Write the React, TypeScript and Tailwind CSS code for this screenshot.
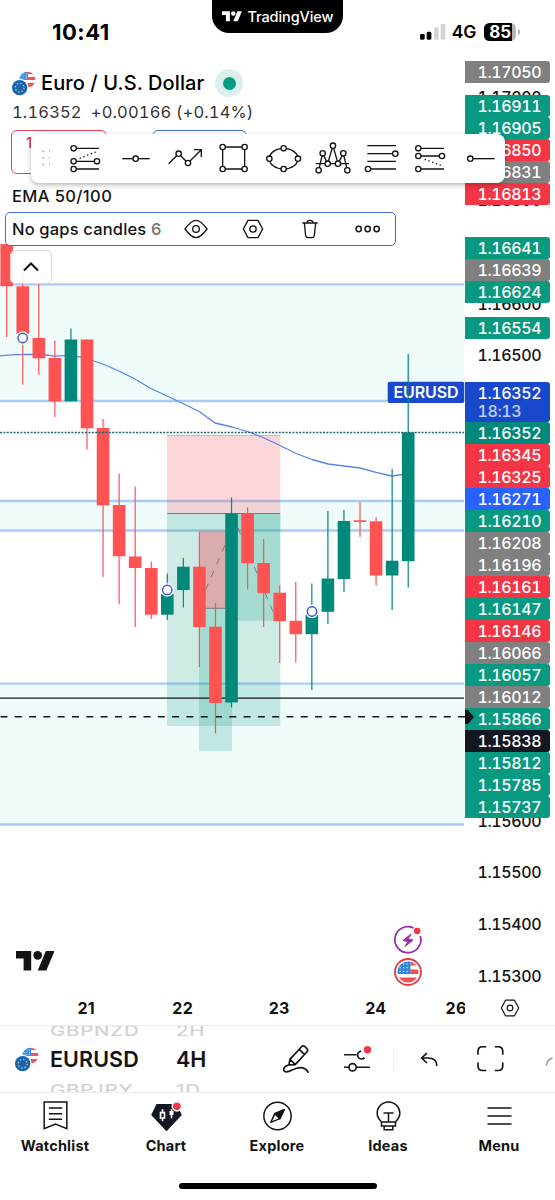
import React from 'react';

const GREEN = '#00897b';
const RED = '#ff5252';

// [colour, high, body top, body bottom, low]
const candles: [string, number, number, number, number][] = [
  [RED, 244, 244, 286.3, 337],
  [RED, 264, 286.3, 334, 384.5],
  [RED, 281, 338, 358.3, 374.5],
  [RED, 340.5, 358, 401.3, 417],
  [GREEN, 328.5, 339.5, 401.3, 401],
  [RED, 339.5, 339.5, 428.3, 449.5],
  [RED, 419, 428, 505.3, 577],
  [RED, 473.5, 505, 556.3, 604],
  [RED, 486.5, 556.5, 568, 627],
  [RED, 561.5, 568, 614.7, 619],
  [GREEN, 573.5, 594, 614.7, 620],
  [GREEN, 558, 566.7, 590, 607.5],
  [RED, 532, 566.7, 627, 667],
  [RED, 603, 626.7, 703, 733.5],
  [GREEN, 497.5, 513.5, 702.5, 707.5],
  [RED, 507.5, 513.5, 563.3, 589.5],
  [RED, 539, 563, 593, 627],
  [RED, 585.5, 592.7, 621.2, 663],
  [RED, 582, 620.8, 634.2, 662.5],
  [GREEN, 583.5, 615, 634.2, 690],
  [GREEN, 511, 578.5, 611.8, 624],
  [GREEN, 510, 521, 579, 592],
  [RED, 502, 520.3, 522, 537],
  [RED, 517, 521.3, 575.5, 585.5],
  [GREEN, 469, 560.7, 575.5, 610],
  [GREEN, 354, 432.3, 561.2, 587.5],
];

// ticks that are fully covered by a price label stay empty
const ticks = [
  '1.17000', '', '1.16800', '', '1.16600', '1.16500', '', '', '', '', '', '', '', '',
  '1.15600', '1.15500', '1.15400', '1.15300',
];

const green = 'bg-[#089981]';
const red = 'bg-[#f23645]';
const gray = 'bg-[#808080]';

const labelGroups = [
  { gap: 'mt-[61px]', items: [['1.17050', gray]] },
  { gap: 'mt-3', items: [['1.16911', green], ['1.16905', green], ['1.16850', red], ['1.16831', gray], ['1.16813', red]] },
  { gap: 'mt-8', items: [['1.16641', green], ['1.16639', gray], ['1.16624', green]] },
  { gap: 'mt-3.5', items: [['1.16554', green]] },
];

const lowerLabels = [
  ['1.16352', 'bg-[#00897b]'], ['1.16345', red], ['1.16325', red], ['1.16271', 'bg-[#2962ff]'], ['1.16210', green],
  ['1.16208', gray], ['1.16196', gray], ['1.16161', red], ['1.16147', green], ['1.16146', red], ['1.16066', gray],
  ['1.16057', green], ['1.16012', gray], ['1.15866', green], ['1.15838', 'bg-[#131722]'], ['1.15812', green],
  ['1.15785', green], ['1.15737', green],
];

const Logo = ({ className }: { className: string }) => (
  <svg viewBox="0 4 35.5 18" className={className} fill="currentColor">
    <path d="M14 22H7V11H0V4h14v18zM28 22h-8l7.5-18h8L28 22z" />
    <circle cx="20" cy="8" r="4" />
  </svg>
);

const Flags = () => (
  <svg viewBox="0 0 72 75" className="w-6 h-[25px] shrink-0">
    <clipPath id="us"><circle cx="46" cy="26" r="24" /></clipPath>
    <g clipPath="url(#us)">
      <path fill="#fff" d="M20 0h52v52H20z" />
      <path fill="#ef5360" d="M46 3h26v7H46zM46 18h26v9H46zM20 36h52v14H20z" />
      <path fill="#3d8fe0" d="M20 0h28v27H20z" />
      <path stroke="#fff" strokeWidth="2" strokeDasharray="3 5" d="M26 9h22M26 16h22M26 22h22" />
    </g>
    <circle cx="23" cy="50" r="27" fill="#fff" />
    <circle cx="23" cy="50" r="23" fill="#1763b6" />
    <circle cx="23" cy="50" r="13" fill="none" stroke="#cfd86a" strokeWidth="4" strokeDasharray="4 6.2" />
  </svg>
);

const Hexagon = ({ className }: { className: string }) => (
  <svg viewBox="0 0 66 60" className={className} fill="none" stroke="#131313" strokeWidth="4" strokeLinejoin="round">
    <path d="M18 4h30l14 26-14 26H18L4 30z" />
    <circle cx="33" cy="30" r="9.5" />
  </svg>
);

const Dots = ({ points }: { points: number[][] }) => (
  <>{points.map(([x, y], i) => <circle key={i} cx={x} cy={y} r="8" fill="#fff" />)}</>
);

const tools = [
  <>
    <path d="M-28-29h68M-28 10h54M-28 33h68" /><path d="M-18 1l56-22" strokeDasharray="4 8" />
    <Dots points={[[-36, -29], [-36, 10], [34, 10], [-36, 33]]} />
  </>,
  <><path d="M-40 2h82" /><Dots points={[[0, 2]]} /></>,
  <>
    <path d="M-48 17l30-30 28 28 40-40M28-25h22v22" /><Dots points={[[-18, -13], [10, 15]]} />
  </>,
  <><path d="M-33-33h66v66h-66z" /><Dots points={[[-33, -33], [33, -33], [-33, 33], [33, 33]]} /></>,
  <><ellipse cx="0" cy="2" rx="43" ry="31" /><Dots points={[[0, -29], [43, 2], [0, 33], [-43, 2]]} /></>,
  <>
    <path d="M-51 17H49M-42 37l12-51 15 31L1-37l15 54 16-31 12 51" />
    <Dots points={[[1, -37], [-30, -14], [32, -14], [-15, 17], [16, 17], [-42, 37], [44, 37]]} />
  </>,
  <><path d="M-43-37h86M-43-13h80M-43 10h86M-37 33h80" /><Dots points={[[41, -13], [-41, 33]]} /></>,
  <>
    <path d="M-30-29h70M-30-6h60M-30 33h70" /><path d="M-18 4l56 21" strokeDasharray="4 8" />
    <Dots points={[[-37, -29], [-37, -6], [34, -6], [-37, 33]]} />
  </>,
  <><path d="M-25 2h67" /><Dots points={[[-31, 2]]} /></>,
];

const Chart = () => (
  <svg viewBox="0 0 465 993" className="w-[465px] h-[993px] shrink-0" fill="none">
    <path fill="#effcfb" d="M0 284h464v117H0zM0 501h464v29.5H0zM0 683.7h464v141H0z" />
    <path stroke="#abcbf5" strokeWidth="2.3" d="M0 284.3h464M0 401h464M0 501h464M0 530.5h464M0 683.7h464M0 824.5h464" />
    <path fill="#f23645" fillOpacity=".2" d="M167 435.5h113.3v78H167z" />
    <path fill="#089981" fillOpacity=".2" d="M167 513.5h113.3V726H167z" />
    <path fill="#089981" fillOpacity=".2" d="M232 513.5h48.3v107.3H232zM199 608.5h33V751h-33z" />
    <path fill="#f23645" fillOpacity=".35" d="M199 531.3h33v77.2h-33z" />
    <path stroke="#e58a94" strokeWidth=".7" d="M167 435.5h113.3M199 531.3h33" />
    <path stroke="#787b86" strokeWidth="1" d="M167 513.5h113.3M199 608.3h33M225 531.3h7" />
    <path stroke="#787b86" strokeDasharray="7 7" d="M200 603L231 531M238 528L276 619" />
    <path
      stroke="#5b82ea"
      strokeWidth="1.3"
      strokeLinejoin="round"
      d="M0 355.8Q10 354.5 25 354.3L42 354.5 55 356.2 70 355.3 82 357.3 94 361 104 364.5 120 371.5 135 379 150 388 166 395.5 183 403.5 200 412 215 423 232 427 252 433 264 438 280 445.5 296 453.5 312 459.5 328 464 344 466 360 468 376 472.3 392 476 406 474"
    />
    <path stroke="#131722" strokeWidth="1.3" d="M0 698.2h464" />
    <path stroke="#131722" strokeWidth="1.4" strokeDasharray="7 7.3" d="M0 716.8h465" strokeDashoffset="-.5" />
    {/* last price tag sits below the candle wick */}
    <rect x="387.7" y="381.7" width="76.6" height="21.3" rx="2" fill="#1848cc" />
    <text x="393.5" y="398" fontSize="16" fontWeight="600" fill="#fff" textLength="65">EURUSD</text>
    {candles.map(([color, high, top, bottom, low], i) => {
      const x = 6.7 + i * 16.06;
      return (
        <g key={i} fill={color}>
          <rect x={x - 0.6} y={high} width="1.2" height={low - high} />
          <rect x={x - 6.3} y={top} width="12.6" height={bottom - top} />
        </g>
      );
    })}
    <path stroke="#1d646b" strokeWidth="1.5" strokeDasharray="2 1.4" d="M0 432.5h464" />
    <g fill="#fff">
      <circle cx="22.7" cy="338" r="6.7" /><circle cx="167.3" cy="590" r="6.700" /><circle cx="312" cy="611.5" r="6.7" />
    </g>
    <g stroke="#2f55d4" strokeWidth="1.4">
      <circle cx="22.7" cy="338" r="4.7" /><circle cx="167.3" cy="590" r="4.7" /><circle cx="312" cy="611.5" r="4.7" />
    </g>

    {/* event markers */}
    <g stroke="#9c27b0" strokeWidth="1.7">
      <path d="M413.5 928a13 13 0 1 0 6.8 8" />
      <path fill="#9c27b0" strokeWidth="1" strokeLinejoin="round" d="M411 934l-8 6.5 5 1-3 5 8-6.5-5-1z" />
    </g>
    <circle cx="417.2" cy="931" r="3.3" fill="#f23645" />
    <circle cx="408" cy="972" r="13" fill="#fff" stroke="#e5394a" strokeWidth="1.8" />
    <clipPath id="usEvent"><circle cx="408" cy="972" r="10.5" /></clipPath>
    <g clipPath="url(#usEvent)">
      <path fill="#ef5350" d="M408 961h12v4.5h-12zM408 969.5h12v4.5h-12zM397 977.5h23v6h-23z" />
      <path fill="#2f86dc" d="M396 960h14.5v14H396z" />
      <path stroke="#fff" strokeWidth="1.1" strokeDasharray="1.2 2.3" d="M399.5 964h11M399.5 967.7h11M399.5 971.5h11" />
    </g>
  </svg>
);

const PriceLabel = ({ value, color }: { value: string; color: string }) => (
  <div className={`w-[85px] h-[22px] pl-[12.5px] leading-[22px] rounded-r-[3px] text-white ${color}`}>{value}</div>
);

const PriceScale = () => (
  <div className="relative w-[90px] h-full text-[16px] font-medium tabular-nums tracking-[-0.4px] text-[#131313]">
    <div className="pt-[72px]">
      {ticks.map((t, i) => <div key={i} className="h-[51.7px] leading-[51.7px] pl-[12.5px]">{t}</div>)}
    </div>
    <div className="absolute inset-0 flex flex-col">
      {labelGroups.map((g) => (
        <div key={g.gap} className={g.gap}>
          {g.items.map(([v, c]) => <PriceLabel key={v} value={v} color={c} />)}
        </div>
      ))}
      <div className="mt-[43px] w-[85px] h-[39.5px] pl-[12.5px] bg-[#1848cc] rounded-r-[3px] text-white leading-[18px] pt-0.5">
        <div>1.16352</div>
        <div className="text-[#c3d0f3]">18:13</div>
      </div>
      <div className="mt-[0.5px]">
        {lowerLabels.map(([v, c]) => <PriceLabel key={v} value={v} color={c} />)}
      </div>
    </div>
    <svg viewBox="0 0 9 14" className="absolute left-0 top-[710px] w-[9px] h-3.5"><path d="M0 0h3l6 7-6 7H0z" fill="#111" /></svg>
  </div>
);

const StatusBar = () => (
  <div className="flex h-16 justify-between items-start">
    <div className="w-[212px] pl-[52px] pt-[19px] text-[22px] leading-[26px] font-bold tracking-[0.5px]">10:41</div>
    <div className="w-[131px] h-[33px] bg-black rounded-b-[17px] text-white flex items-center pl-2.5 gap-[5.5px]">
      <Logo className="w-5 h-[10.5px]" />
      <span className="text-[14.5px] font-medium tracking-[-0.1px]">TradingView</span>
    </div>
    <div className="w-[212px] pl-[77px] pt-[22px] flex items-center">
      <svg viewBox="0 0 77 48" className="w-[25.7px] h-4">
        <rect x="0" y="30" width="14" height="17" rx="4" /><rect x="20" y="23" width="14" height="24" rx="4" />
        <rect x="42" y="10" width="14" height="37" rx="4" fill="#d4d4d4" /><rect x="62" y="0" width="14" height="47" rx="4" fill="#d4d4d4" />
      </svg>
      <span className="ml-[6px] w-[26px] text-[17.5px] leading-5 font-semibold">4G</span>
      <div className="ml-[6.5px] w-8 h-[18px] rounded-[5.5px] bg-[linear-gradient(90deg,#000_86%,#b5b5b5_86%)] text-white text-[17px] leading-[18px] font-bold text-center">85</div>
      <div className="ml-0.5 w-[1.5px] h-1.5 rounded-r bg-[#b5b5b5]" />
    </div>
  </div>
);

const Header = () => (
  <div className="absolute inset-x-0 top-0">
    <StatusBar />
    <div className="flex items-center h-[38px] pl-3">
      <Flags />
      <span className="ml-[5px] w-[170px] text-[20px] font-medium tracking-[0.1px] whitespace-nowrap">Euro / U.S. Dollar</span>
      <div className="ml-1 w-7 h-7 rounded-full bg-[#daf0ec] flex items-center justify-center">
        <div className="w-[13px] h-[13px] rounded-full bg-[#089981]" />
      </div>
    </div>
    <div className="pl-3 h-5 leading-5 text-[16.5px] tabular-nums tracking-[0.15px] text-[#333] whitespace-nowrap">1.16352&nbsp; +0.00166 (+0.14%)</div>

    <div className="relative mt-2 pl-[11px] flex gap-[45px] h-11">
      <div className="w-24 border-[1.5px] border-[#e0455a] rounded-md text-[#e0344a] text-[15px] leading-6 font-medium pl-3.5">1</div>
      <div className="w-[95px] border-[1.5px] border-[#4268dc] rounded-md" />
      <div className="absolute left-[31px] top-[3.5px] w-[474px] h-[49px] rounded-lg bg-white shadow-[0_2px_5px_rgba(0,0,0,0.28)] flex items-center">
        <svg viewBox="0 0 10 18" className="ml-[10.5px] w-2.5 h-[18px] mr-[11px]" fill="#b8b8b8">
          {[1.5, 9, 16.5].map((y) => <g key={y}><circle cx="1.5" cy={y} r="1.2" /><circle cx="9" cy={y} r="1.2" /></g>)}
        </svg>
        {tools.map((t, i) => (
          <svg key={i} viewBox="-74 -51 148 102" className="w-[49.3px] h-[34px] shrink-0" fill="none" stroke="#131313" strokeWidth="4">{t}</svg>
        ))}
      </div>
    </div>

    <div className="mt-[11px] h-[22px] leading-[22px] pl-3 text-[16.5px] font-medium tracking-[0.4px] text-[#131313]">EMA 50/100</div>
    <div className="mt-[5px] ml-[5px] w-[391px] h-[34px] bg-white border-[1.5px] border-[#4268dc] rounded-[5px] flex items-center text-[16.5px] font-medium text-[#131313]">
      <span className="ml-1.5 w-[139px] tracking-[0.17px] whitespace-nowrap">No gaps candles</span>
      <span className="w-5 text-[#757575]">6</span>
      <svg viewBox="0 0 72 60" className="ml-[13px] w-6 h-5" fill="none" stroke="#131313" strokeWidth="4">
        <path d="M3 30C16 12 26 4 36 4s20 8 33 26C56 48 46 56 36 56S16 48 3 30z" /><circle cx="36" cy="30" r="10" />
      </svg>
      <Hexagon className="ml-[33.5px] w-[22px] h-5" />
      <svg viewBox="0 0 48 60" className="ml-[38.5px] w-4 h-5" fill="none" stroke="#131313" strokeWidth="4">
        <path d="M1 12h46M15 12c0-6 3-8 9-8s9 2 9 8M7 12l4 38q1 6 6 6h14q5 0 6-6l4-38" />
      </svg>
      <svg viewBox="0 0 78 24" className="ml-[36.5px] w-[26px] h-2" fill="none" stroke="#131313" strokeWidth="4.5">
        <circle cx="11" cy="12" r="8" /><circle cx="38" cy="12" r="8" /><circle cx="65" cy="12" r="8" />
      </svg>
    </div>
    <div className="mt-1 ml-2.5 w-[42px] h-[34px] rounded-[5px] border border-[#d8d8d8] bg-white/90 flex items-center justify-center">
      <svg viewBox="0 0 16 10" className="w-4 h-2.5" fill="none" stroke="#111" strokeWidth="2"><path d="M1 8.5l7-7 7 7" /></svg>
    </div>
  </div>
);

const TimeScale = () => (
  <div className="h-8 flex items-center text-[16px] font-bold tracking-[0.3px] text-[#131313]">
    <div className="w-[464.5px] h-8 leading-[30px] flex overflow-hidden pl-[38px]">
      {['21', '22', '23', '24'].map((d) => <div key={d} className="w-[96.5px] shrink-0 text-center">{d}</div>)}
      <div className="pl-[21.5px]">26</div>
    </div>
    <Hexagon className="ml-[35.5px] -mt-0.5 w-5 h-[18px]" />
  </div>
);

const SymbolBar = () => (
  <div className="h-[68px] border-y border-[#ececec] flex items-center overflow-hidden text-[21.5px] font-semibold text-[#131313]">
    <div className="ml-[15px]"><Flags /></div>
    {[['GBPNZD', 'EURUSD', 'GBPJPY'], ['2H', '4H', '1D']].map((col, i) => (
      <div key={i} className={i === 0 ? 'ml-[11px] w-[127px]' : 'w-[106.5px]'}>
        <div className="h-[31px] leading-[31px] text-[20.5px] font-medium text-[#d2d2d2] scale-y-[0.7] translate-y-[2px] tracking-[0.7px]">{col[0]}</div>
        <div className="h-[30px] leading-[30px] tracking-[0.1px]">{col[1]}</div>
        <div className="h-[31px] leading-[31px] text-[20.5px] font-medium text-[#d2d2d2] scale-y-[0.7] tracking-[0.7px]">{col[2]}</div>
      </div>
    ))}
    <svg viewBox="20 400 84 90" className="w-7 h-[30px]" fill="none" stroke="#131313" strokeWidth="5" strokeLinecap="round" strokeLinejoin="round">
      <path d="M41 463l3-17 35-38q5-5 11 0l5 5q5 6 0 11l-35 38zM44 446l16 15M72 416l16 15M41 463c-16 2-22 20-8 21 12 1 24-13 42-13 12 0 20 7 24 14" />
    </svg>
    <svg viewBox="205 400 87 84" className="ml-[33.5px] w-[29px] h-7" fill="none" stroke="#131722" strokeWidth="5">
      <path d="M208 429h38M270 438a12 12 0 1 1-10-20M208 467h14M246 467h41" /><circle cx="234" cy="467" r="11" />
      <circle cx="279" cy="414" r="11" fill="#f23645" stroke="none" />
    </svg>
    <div className="ml-[21.5px] w-px h-[22px] bg-[#ececec]" />
    <svg viewBox="438 424 54 44" className="ml-[26px] w-[18px] h-[14.7px]" fill="none" stroke="#131313" strokeWidth="5">
      <path d="M459 427l-16 15 16 15M443 442h22q24 2 24 24" />
    </svg>
    <svg viewBox="612 405 82 82" className="ml-[39.5px] w-[27.3px] h-[27.3px]" fill="none" stroke="#131313" strokeWidth="5">
      <path d="M615 434v-10q0-14 14-14h11M666 410h10q14 0 14 14v10M690 458v10q0 14-14 14h-10M640 482h-11q-14 0-14-14v-10" />
    </svg>
    <svg viewBox="0 0 9 10" className="ml-[40.5px] mt-1.5 w-2.5 h-2.5 shrink-0" fill="none" stroke="#9a9a9a" strokeWidth="1.6"><path d="M1 9q0-6 6-8" /></svg>
  </div>
);

const tabs = [
  {
    name: 'Watchlist',
    icon: (
      <svg viewBox="-51 -45 102 90" className="w-[34px] h-[30px]" fill="none" stroke="#131313" strokeWidth="4.5">
        <path d="M-34-42h68v80L0 24l-34 14zM-20-24h40M-20-7h40M-20 10h40" />
      </svg>
    ),
  },
  {
    name: 'Chart',
    icon: (
      <svg viewBox="-51 -45 102 90" className="w-[34px] h-[30px]">
        <path d="M-30-36h60l16 33L0 46l-46-49z" fill="#131722" />
        <path d="M-12-20v36M15-20v27" stroke="#fff" strokeWidth="5" />
        <path d="M-18-10h12v16h-12z" fill="#131722" stroke="#fff" strokeWidth="5" />
        <path d="M9-15h12v12H9z" fill="#fff" />
        <circle cx="31" cy="-29" r="16" fill="#fff" /><circle cx="31" cy="-29" r="11.5" fill="#f23645" />
      </svg>
    ),
  },
  {
    name: 'Explore',
    icon: (
      <svg viewBox="-51 -45 102 90" className="w-[34px] h-[30px]" fill="none" stroke="#131313" strokeWidth="4.5" strokeLinejoin="round">
        <circle cx="0" cy="0" r="41" />
        <path d="M20-19L-8-7-20 19 7 8z" /><path d="M20-19L-8-7 7 8z" fill="#131313" />
      </svg>
    ),
  },
  {
    name: 'Ideas',
    icon: (
      <svg viewBox="-51 -45 102 90" className="w-[34px] h-[30px]" fill="none" stroke="#131313" strokeWidth="4.5">
        <path d="M-21 18C-29 10-34 2-34-8a34 34 0 0 1 68 0C34 2 29 10 21 18zM-21 18v12h42V18M-13 30v11h26V30M-15-9h30M0-9v27" />
      </svg>
    ),
  },
  {
    name: 'Menu',
    icon: (
      <svg viewBox="-51 -45 102 90" className="w-[34px] h-[30px]" stroke="#131313" strokeWidth="4.5">
        <path d="M-36-24h72M-36 0h72M-36 24h72" />
      </svg>
    ),
  },
];

const App: React.FC = () => (
  <div className="w-[555px] h-[1200px] bg-white overflow-hidden flex flex-col font-['Inter',sans-serif] text-black">
    <div className="relative h-[993px] flex overflow-hidden">
      <Chart />
      <PriceScale />
      <Header />
      <Logo className="absolute left-[15.5px] top-[951px] w-[38.5px] h-[19.5px] text-[#131313]" />
    </div>
    <TimeScale />
    <SymbolBar />
    <div className="grid grid-cols-5 h-[90px] pt-[7.5px] text-[#131313]">
      {tabs.map((t) => (
        <div key={t.name} className="flex flex-col items-center -translate-x-[0.5px]">
          {t.icon}
          <span className="mt-[5px] text-[14.5px] leading-5 font-bold tracking-[0.2px]">{t.name}</span>
        </div>
      ))}
    </div>
    <div className="mx-auto w-[198px] h-1.5 rounded-full bg-black shrink-0" />
  </div>
);

export default App;
